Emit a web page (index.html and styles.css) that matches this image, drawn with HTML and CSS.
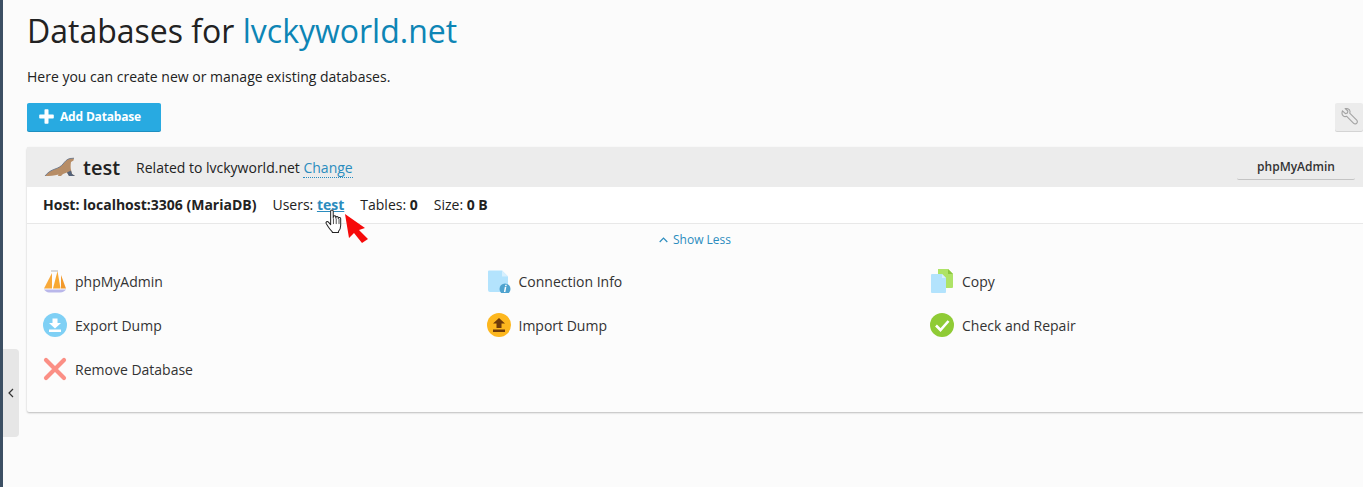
FILE: index.html
```html
<!DOCTYPE html>
<html lang="en">

<head>
    <meta charset="UTF-8">
    <title>Databases for lvckyworld.net</title>
    <link rel="stylesheet" href="styles.css">
</head>

<body>
    <div class="rail"></div>
    <div class="collapse">
        <svg width="6" height="10" viewBox="0 0 6 10"><path d="M5 1 1 5l4 4" fill="none" stroke="#333" stroke-width="1.2"/></svg>
    </div>
    <div class="main">
        <h1 class="title">Databases for <a href="#">lvckyworld.net</a></h1>
        <p class="hint">Here you can create new or manage existing databases.</p>
        <div class="toolbar">
            <a class="btn-add" href="#">
                <svg width="15" height="15" viewBox="0 0 15 15"><path d="M5.500 1a.8.8 0 0 1 .8-.8h2.400a.8.8 0 0 1 .8.8v4.500h4.500a.8.8 0 0 1 .8.8v2.400a.8.8 0 0 1-.8.8H9.500v4.500a.8.8 0 0 1-.8.8H6.300a.8.8 0 0 1-.8-.8V9.500H1a.8.8 0 0 1-.8-.8V6.300a.8.8 0 0 1 .8-.8h4.500z" fill="#fff"/></svg>
                Add Database
            </a>
            <a class="btn-tool" href="#">
                <svg width="18" height="18" viewBox="0 0 18 18"><path d="M2.500 2.800 5.400 5.600l2-.6.500-2-2.800-2.400C7.500.2 9.700 1 10 3.200c.1.900-.1 1.500-.3 2l7 7c.8.900.8 2 .1 2.900-.8 1-2.200 1.100-3.100.2l-7-7c-1 .4-2.500.4-3.500-.5C1.900 6.800 1.800 4.700 2.500 2.800z" fill="none" stroke="#a3a3a3" stroke-width="1.100" stroke-linejoin="round"/></svg>
            </a>
        </div>
        <div class="card">
            <div class="card-head">
                <svg class="seal" width="32" height="22" viewBox="0 0 32 22">
                    <path d="M2 20C5 16 8 14.500 12 13 15 12 18 10.500 20 8 22 5.500 24 3 27 2.500L31 2.200 30.500 4.500 28 6C27.500 9 27.500 12 28 14L29 18 32 20H26L24 16.500 20 18 18 20H15L15.500 18.500C11 19.500 7 20 2 20z" fill="#b78d66"/>
                    <path d="M2 20C5 16 8 14.500 12 13 15 12 18 10.500 20 8 22 5.500 24 3 27 2.500L31 2.200" fill="none" stroke="#5f6f86" stroke-width=".8"/>
                    <path d="M24 16.500 26 20H32L29 18 28 14.500z" fill="#54637a"/>
                </svg>
                <span class="db-name">test</span>
                <span class="related">Related to lvckyworld.net <a href="#">Change</a></span>
                <a class="btn-pma" href="#">phpMyAdmin</a>
            </div>
            <div class="card-info">
                <b>Host: localhost:3306 (MariaDB)</b>
                <span>Users: <a href="#">test</a></span>
                <span>Tables: <b>0</b></span>
                <span>Size: <b>0 B</b></span>
            </div>
            <div class="show-less">
                <svg width="9" height="6" viewBox="0 0 9 6"><path d="M.7 5 4.500 1.200 8.300 5" fill="none" stroke="#2b8cbe" stroke-width="1.200"/></svg>
                Show Less
            </div>
            <div class="actions">
                <a class="action" href="#">
                    <svg width="24" height="26" viewBox="0 0 24 26">
                        <path d="M9 5 1 20.500h8z" fill="#f8a93a"/>
                        <path d="M14.500 3 10 20.500h7.500z" fill="#f7a832"/>
                        <path d="M18 7v13.500h5z" fill="#f2992b"/>
                        <path d="M8 3h7" stroke="#b5b5b5" stroke-width="1"/>
                        <path d="M1 21.500h22c-1 1.500-3 3-6 3H6c-2 0-4-1.500-5-3z" fill="#b9b7ea"/>
                    </svg>
                    phpMyAdmin
                </a>
                <a class="action" href="#">
                    <svg width="24" height="24" viewBox="0 0 24 24">
                        <path d="M2 1.500h13l6 6V21a2 2 0 0 1-2 2H3a2 2 0 0 1-2-2V2.500a1 1 0 0 1 1-1z" fill="#b3e3fd"/>
                        <path d="M15 1.500l6 6h-6z" fill="#d7f0fe"/>
                        <circle cx="18" cy="20" r="5.500" fill="#4fa3cf"/>
                        <path d="M18.300 15.800h1.500l-.3 1.500H18zM17.800 18h1.500l-.9 5h-1.500z" fill="#fff"/>
                    </svg>
                    Connection Info
                </a>
                <a class="action" href="#">
                    <svg width="24" height="24" viewBox="0 0 24 24">
                        <path d="M8 0h10l5 5v13a1 1 0 0 1-1 1H8z" fill="#aee367"/>
                        <path d="M18 0l5 5h-5z" fill="#8cc63f"/>
                        <path d="M2 5h10l4 4v14a1 1 0 0 1-1 1H2a1 1 0 0 1-1-1V6a1 1 0 0 1 1-1z" fill="#b3e3fd"/>
                        <path d="M12 5l4 4h-4z" fill="#d7f0fe"/>
                    </svg>
                    Copy
                </a>
                <a class="action" href="#">
                    <svg width="24" height="24" viewBox="0 0 24 24">
                        <circle cx="12" cy="12" r="12" fill="#7fd0f5"/>
                        <path d="M9.500 5.500h5V10H18l-6 5.500L6 10h3.500zM6 16.500h12V19H6z" fill="#fff"/>
                    </svg>
                    Export Dump
                </a>
                <a class="action" href="#">
                    <svg width="24" height="24" viewBox="0 0 24 24">
                        <circle cx="12" cy="12" r="12" fill="#fdb71e"/>
                        <path d="M12 5l6 5.500h-3.500V15h-5v-4.500H6zM6 16.500h12V19H6z" fill="#6e3b0a"/>
                    </svg>
                    Import Dump
                </a>
                <a class="action" href="#">
                    <svg width="24" height="24" viewBox="0 0 24 24">
                        <circle cx="12" cy="12" r="12" fill="#8fcb35"/>
                        <path d="M6 12.500l4.500 4.500L18.500 8" fill="none" stroke="#fff" stroke-width="2.600"/>
                    </svg>
                    Check and Repair
                </a>
                <a class="action" href="#">
                    <svg width="24" height="24" viewBox="0 0 24 24">
                        <path d="M3 3l18 18M21 3 3 21" stroke="#fb8f85" stroke-width="4.200" stroke-linecap="round"/>
                    </svg>
                    Remove Database
                </a>
            </div>
        </div>
    </div>
    <svg class="hand" width="20" height="24" viewBox="0 0 16 21.500">
        <path d="M5 2c0-1.500 2.300-1.500 2.300 0v6l.1-1c.3-1.200 2-1.200 2.200 0v1l.1-.6c.3-1.100 2-1 2.100.1v1l.2-.4c.4-.9 1.900-.7 2 .4v6c0 3-1 4.500-2 5.500v1H6.500v-.5C5 19 4 18 2.500 15.500L1 13c-.7-1.300 1-2.500 2-1.300L5 14z" fill="#fff" stroke="#222" stroke-width=".9" stroke-linejoin="round"/>
        <path d="M7.500 8.500v5M10 8.500v5M12.500 9v4.500" stroke="#222" stroke-width=".7"/>
    </svg>
    <svg class="arrow" width="25" height="31" viewBox="0 0 25 31">
        <path d="M1 1 5 25l5-5 8 10 6-4-9-9 6-2z" fill="#f60a0a"/>
    </svg>
</body>

</html>
```

FILE: styles.css
```css
* {
    margin: 0;
    padding: 0;
    box-sizing: border-box;
}

html,
body {
    height: 100%;
    overflow: hidden;
}

body {
    display: flex;
    position: relative;
    background-color: #fbfbfb;
    font-family: "Open Sans", "Liberation Sans", sans-serif;
    font-size: 14px;
    color: #222;
}

a {
    color: #2b8cbe;
    text-decoration: none;
}

.rail {
    width: 3px;
    flex: none;
    background-color: #3c4f63;
}

.collapse {
    position: absolute;
    left: 3px;
    top: 349px;
    width: 16px;
    height: 88px;
    display: flex;
    align-items: center;
    justify-content: center;
    background-color: #e6e6e6;
    border-radius: 0 4px 4px 0;
}

.main {
    flex: 1;
    min-width: 0;
    padding: 9px 0 0 24px;
}

.title {
    font-size: 32px;
    font-weight: 400;
    line-height: 44px;
    color: #222;
}

.title a {
    color: #0d85b5;
}

.hint {
    margin-top: 14px;
    line-height: 20px;
}

.toolbar {
    display: flex;
    justify-content: space-between;
    margin-top: 16px;
    height: 28px;
}

.btn-add {
    display: flex;
    align-items: center;
    gap: 6px;
    width: 134px;
    height: 28px;
    padding: 0 0 2px 12px;
    background-color: #28aae1;
    border-radius: 2px;
    font-size: 12px;
    font-weight: 700;
    letter-spacing: -0.17px;
    color: #fff;
    box-shadow: 0 1px 0 #1e8fc0;
}

.btn-tool {
    display: flex;
    align-items: center;
    justify-content: center;
    width: 28px;
    height: 28px;
    padding-bottom: 1px;
    padding-right: 1px;
    background-color: #ececec;
    border-radius: 2px;
    box-shadow: 0 1px 0 #d4d4d4;
}

.card {
    margin-top: 16px;
    height: 265px;
    background-color: #fcfcfc;
    border-radius: 2px 0 0 2px;
    box-shadow: 0 1px 2px rgba(0, 0, 0, 0.25);
}

.card-head {
    display: flex;
    align-items: center;
    height: 40px;
    padding: 0 8px 0 16px;
    background-color: #ececec;
}

.seal {
    margin-right: 8px;
}

.db-name {
    font-size: 20px;
    font-weight: 600;
    margin-right: 16px;
}

.related {
    flex: 1;
}

.related a {
    border-bottom: 1px dotted #2b8cbe;
}

.btn-pma {
    width: 118px;
    height: 26px;
    line-height: 25px;
    text-align: center;
    font-size: 12px;
    font-weight: 600;
    color: #333;
    border-bottom: 1px solid #c4c4c4;
    border-radius: 2px;
}

.card-info {
    display: flex;
    align-items: center;
    gap: 16px;
    height: 37px;
    padding: 0 0 2px 16px;
    background-color: #fff;
    border-bottom: 1px solid #e8e8e8;
}

.card-info a {
    font-weight: 700;
    text-decoration: underline;
}

.show-less {
    display: flex;
    align-items: center;
    justify-content: center;
    gap: 5px;
    height: 31px;
    font-size: 12px;
    color: #2b8cbe;
}

.actions {
    display: grid;
    grid-template-columns: 443.500px 443.500px 1fr;
    grid-auto-rows: 44px;
    padding: 4px 0 0 16px;
}

.action {
    display: flex;
    align-items: center;
    gap: 8px;
    color: #333;
}

.hand {
    position: absolute;
    left: 324px;
    top: 209px;
}

.arrow {
    position: absolute;
    left: 344px;
    top: 213px;
}
```
